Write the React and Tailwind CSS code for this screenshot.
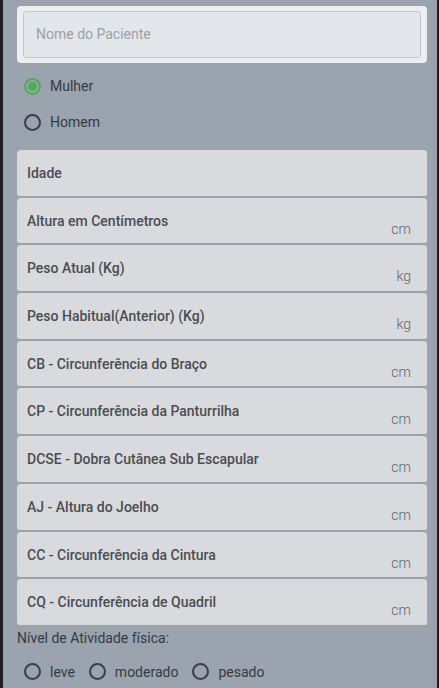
import React, { useState } from 'react';

const fields = [
  { label: 'Idade', unit: '' },
  { label: 'Altura em Centímetros', unit: 'cm' },
  { label: 'Peso Atual (Kg)', unit: 'kg' },
  { label: 'Peso Habitual(Anterior) (Kg)', unit: 'kg' },
  { label: 'CB - Circunferência do Braço', unit: 'cm' },
  { label: 'CP - Circunferência da Panturrilha', unit: 'cm' },
  { label: 'DCSE - Dobra Cutânea Sub Escapular', unit: 'cm' },
  { label: 'AJ - Altura do Joelho', unit: 'cm' },
  { label: 'CC - Circunferência da Cintura', unit: 'cm' },
  { label: 'CQ - Circunferência de Quadril', unit: 'cm' },
];

const Radio = ({ checked, label, onClick }) => (
  <button onClick={onClick} className="flex items-center gap-[9px] text-[14px] leading-[20px] text-[#353a42]">
    <span
      className={
        checked
          ? 'w-[17px] h-[17px] rounded-full border-2 border-[#4caf50] flex items-center justify-center'
          : 'w-[17px] h-[17px] rounded-full border-2 border-[#3a3f47] flex items-center justify-center'
      }
    >
      {checked && <span className="w-[9px] h-[9px] rounded-full bg-[#4caf50]"></span>}
    </span>
    <span>{label}</span>
  </button>
);

const App = () => {
  const [sexo, setSexo] = useState('mulher');
  const [atividade, setAtividade] = useState('');

  return (
    <div className="flex w-[439px] h-[688px] overflow-hidden bg-[#1e1e1e] font-['Roboto',sans-serif]">
      <div className="w-[3px] shrink-0 bg-[#1e1e1e]"></div>
      <div className="flex-1 bg-[#9aa3ae] pl-[14px] pr-[10px] mr-[2px]">
        {/* Nome */}
        <div className="mt-[6px] bg-[#eceef1] rounded-[4px] px-[6px] py-[5px]">
          <div className="h-[47px] border border-[#c3c7cd] rounded-[3px] bg-[#e3e6ea] flex items-center px-[12px]">
            <span className="text-[14px] text-[#9ca0a6]">Nome do Paciente</span>
          </div>
        </div>

        {/* Sexo */}
        <div className="flex flex-col gap-[16px] pl-[7px] mt-[13px]">
          <Radio checked={sexo === 'mulher'} label="Mulher" onClick={() => setSexo('mulher')} />
          <Radio checked={sexo === 'homem'} label="Homem" onClick={() => setSexo('homem')} />
        </div>

        {/* Campos */}
        <div className="mt-[18px] flex flex-col">
          {fields.map((f) => (
            <div
              key={f.label}
              className="h-[47.7px] bg-[#d9dadd] rounded-[4px] border-b-2 border-[#9da2a9] flex justify-between px-[10px]"
            >
              <span className="text-[14px] leading-[20px] font-medium text-[#4a4d53] mt-[13px]">{f.label}</span>
              <span className="text-[14px] leading-[20px] font-light text-[#5f636a] mt-[21px] mr-[6px]">{f.unit}</span>
            </div>
          ))}
        </div>

        {/* Atividade */}
        <div className="mt-[1px] text-[14px] leading-[20px] text-[#353a42]">Nível de Atividade física:</div>
        <div className="flex gap-[14px] pl-[7px] mt-[14px]">
          <Radio checked={atividade === 'leve'} label="leve" onClick={() => setAtividade('leve')} />
          <Radio checked={atividade === 'moderado'} label="moderado" onClick={() => setAtividade('moderado')} />
          <Radio checked={atividade === 'pesado'} label="pesado" onClick={() => setAtividade('pesado')} />
        </div>
      </div>
    </div>
  );
};

export default App;
